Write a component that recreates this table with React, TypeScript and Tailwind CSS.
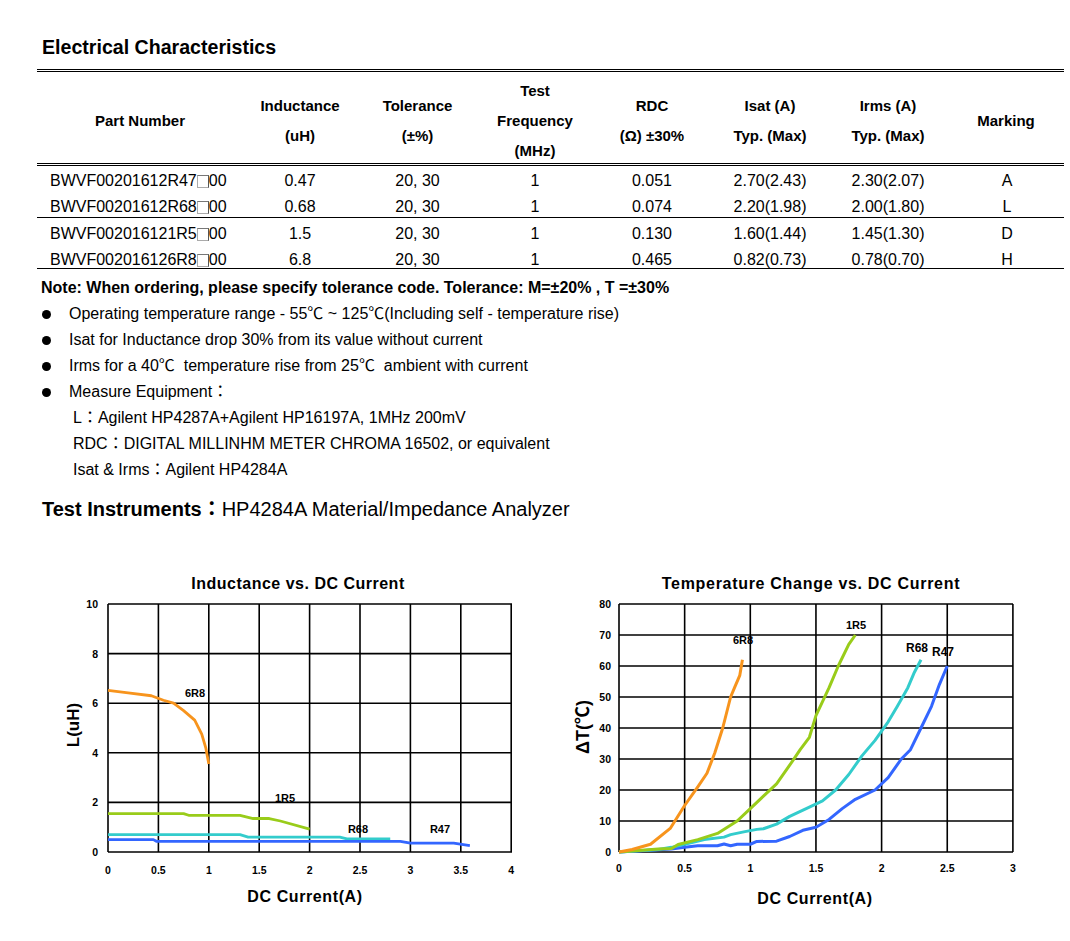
import React from "react";

type Pt = [number, number];

const COLS = "grid grid-cols-[206px_114px_121px_114px_120px_116px_120px_116px]";

const rows = [
    ["BWVF00201612R47", "0.47", "20, 30", "1", "0.051", "2.70(2.43)", "2.30(2.07)", "A"],
    ["BWVF00201612R68", "0.68", "20, 30", "1", "0.074", "2.20(1.98)", "2.00(1.80)", "L"],
    ["BWVF002016121R5", "1.5", "20, 30", "1", "0.130", "1.60(1.44)", "1.45(1.30)", "D"],
    ["BWVF002016126R8", "6.8", "20, 30", "1", "0.465", "0.82(0.73)", "0.78(0.70)", "H"],
];

const headers: string[][] = [
    ["Part Number"],
    ["Inductance", "(uH)"],
    ["Tolerance", "(±%)"],
    ["Test", "Frequency", "(MHz)"],
    ["RDC", "(Ω) ±30%"],
    ["Isat (A)", "Typ. (Max)"],
    ["Irms (A)", "Typ. (Max)"],
    ["Marking"],
];

const ORANGE = "#f7941d";
const GREEN = "#99cc1a";
const TEAL = "#33cccc";
const BLUE = "#3366ff";

// inductance chart data (A, uH)
const lSeries: { color: string; pts: Pt[] }[] = [
    { color: ORANGE, pts: [[0, 6.52], [0.2, 6.42], [0.43, 6.3], [0.55, 6.12], [0.65, 6.0], [0.75, 5.7], [0.86, 5.32], [0.93, 4.75], [0.97, 4.2], [1.0, 3.55]] },
    { color: GREEN, pts: [[0, 1.55], [0.75, 1.55], [0.8, 1.48], [1.31, 1.48], [1.44, 1.35], [1.6, 1.35], [1.71, 1.25], [2.0, 0.92]] },
    { color: TEAL, pts: [[0, 0.7], [1.31, 0.7], [1.39, 0.6], [2.3, 0.6], [2.37, 0.53], [2.8, 0.53]] },
    { color: BLUE, pts: [[0, 0.5], [0.45, 0.5], [0.48, 0.43], [2.9, 0.43], [3.0, 0.36], [3.43, 0.36], [3.59, 0.26]] },
];

// temperature chart data (A, degC)
const tSeries: { color: string; pts: Pt[] }[] = [
    { color: BLUE, pts: [[0, 0], [0.4, 1], [0.5, 1.5], [0.6, 2], [0.75, 2], [0.8, 2.6], [0.85, 2], [0.9, 2.5], [1.0, 2.5], [1.05, 3.4], [1.2, 3.5], [1.3, 5], [1.4, 7], [1.5, 8], [1.6, 10.5], [1.7, 14], [1.8, 17], [1.95, 20], [2.05, 24], [2.15, 30], [2.22, 33], [2.3, 40], [2.38, 47], [2.44, 54], [2.5, 60]] },
    { color: TEAL, pts: [[0, 0], [0.3, 0.8], [0.4, 1.5], [0.5, 2.5], [0.65, 4], [0.8, 4.8], [0.85, 5.6], [0.95, 6.5], [1.05, 7.3], [1.1, 7.5], [1.2, 9], [1.3, 11.5], [1.45, 14.5], [1.55, 16.5], [1.65, 20], [1.75, 25], [1.85, 31], [1.95, 36], [2.05, 42], [2.12, 47], [2.2, 53], [2.25, 58], [2.3, 62]] },
    { color: GREEN, pts: [[0, 0], [0.3, 1], [0.4, 1.1], [0.45, 2.4], [0.6, 4], [0.75, 6], [0.9, 10], [1.0, 14], [1.1, 18], [1.2, 22], [1.3, 28], [1.38, 33], [1.45, 37], [1.5, 44], [1.6, 53], [1.67, 60], [1.75, 67], [1.8, 70]] },
    { color: ORANGE, pts: [[0, 0], [0.1, 0.8], [0.24, 2.5], [0.39, 7.6], [0.5, 15], [0.6, 21], [0.67, 25.4], [0.73, 32], [0.79, 40], [0.85, 50], [0.88, 53], [0.92, 57], [0.94, 62]] },
];

const chartFont = "'Liberation Sans', Arial, 'Noto Sans CJK TC', sans-serif";

function InductanceChart() {
    const px = (a: number) => 48 + a * 100.8;
    const py = (l: number) => 287 - l * 24.8;
    const xt = [0, 0.5, 1, 1.5, 2, 2.5, 3, 3.5, 4];
    const yt = [0, 2, 4, 6, 8, 10];
    return (
        <svg width="470" height="350" viewBox="0 0 470 350" fontFamily={chartFont}>
            <text x="238" y="24" textAnchor="middle" fontSize="16" fontWeight="700" letterSpacing="0.5">Inductance vs. DC Current</text>
            {xt.map((v) => (
                <g key={v}>
                    <line x1={px(v)} y1="39" x2={px(v)} y2="287" stroke="#000" strokeWidth="1.6" />
                    <text x={px(v)} y="309" textAnchor="middle" fontSize="10.5" fontWeight="700">{v}</text>
                </g>
            ))}
            {yt.map((v) => (
                <g key={v}>
                    <line x1="48" y1={py(v)} x2="452" y2={py(v)} stroke="#000" strokeWidth="1.6" />
                    <text x="38" y={py(v) + 4} textAnchor="end" fontSize="10.5" fontWeight="700">{v}</text>
                </g>
            ))}
            {lSeries.map((s) => (
                <polyline key={s.color} points={s.pts.map(([a, l]) => `${px(a)},${py(l)}`).join(" ")} fill="none" stroke={s.color} strokeWidth="2.8" strokeLinejoin="round" />
            ))}
            <text x="135" y="132" textAnchor="middle" fontSize="11" fontWeight="700">6R8</text>
            <text x="225" y="237" textAnchor="middle" fontSize="11" fontWeight="700">1R5</text>
            <text x="298" y="268" textAnchor="middle" fontSize="11" fontWeight="700">R68</text>
            <text x="380" y="268" textAnchor="middle" fontSize="11" fontWeight="700">R47</text>
            <text x="13" y="160" textAnchor="middle" dominantBaseline="central" fontSize="17" fontWeight="700" transform="rotate(-90 13 160)">L(uH)</text>
            <text x="245" y="337" textAnchor="middle" fontSize="16" fontWeight="700" letterSpacing="0.6">DC Current(A)</text>
        </svg>
    );
}

function TemperatureChart() {
    const px = (a: number) => 49 + a * 131.3;
    const py = (t: number) => 287 - t * 3.1;
    const xt = [0, 0.5, 1, 1.5, 2, 2.5, 3];
    const yt = [0, 10, 20, 30, 40, 50, 60, 70, 80];
    return (
        <svg width="460" height="350" viewBox="0 0 460 350" fontFamily={chartFont}>
            <text x="241" y="24" textAnchor="middle" fontSize="16" fontWeight="700" letterSpacing="0.7">Temperature Change vs. DC Current</text>
            {xt.map((v) => (
                <g key={v}>
                    <line x1={px(v)} y1="39" x2={px(v)} y2="287" stroke="#000" strokeWidth="1.6" />
                    <text x={px(v)} y="307" textAnchor="middle" fontSize="10.5" fontWeight="700">{v}</text>
                </g>
            ))}
            {yt.map((v) => (
                <g key={v}>
                    <line x1="49" y1={py(v)} x2="443" y2={py(v)} stroke="#000" strokeWidth="1.6" />
                    <text x="41" y={py(v) + 4} textAnchor="end" fontSize="10.5" fontWeight="700">{v}</text>
                </g>
            ))}
            {tSeries.map((s) => (
                <polyline key={s.color} points={s.pts.map(([a, t]) => `${px(a)},${py(t)}`).join(" ")} fill="none" stroke={s.color} strokeWidth="3" strokeLinejoin="round" />
            ))}
            <text x="173" y="79" textAnchor="middle" fontSize="11" fontWeight="700">6R8</text>
            <text x="286" y="64" textAnchor="middle" fontSize="11" fontWeight="700">1R5</text>
            <text x="347" y="87" textAnchor="middle" fontSize="12" fontWeight="700">R68</text>
            <text x="373" y="91" textAnchor="middle" fontSize="12" fontWeight="700">R47</text>
            <text x="13" y="162" textAnchor="middle" dominantBaseline="central" fontSize="18" fontWeight="700" transform="rotate(-90 13 162)">ΔT(℃)</text>
            <text x="245" y="339" textAnchor="middle" fontSize="16" fontWeight="700" letterSpacing="0.6">DC Current(A)</text>
        </svg>
    );
}

function DataRow({ r }: { r: string[] }) {
    return (
        <div className={`${COLS} text-[16px] leading-[26px]`}>
            <div className="pl-[13px] flex items-center">
                {r[0]}
                <span className="inline-block shrink-0 w-[12px] h-[13px] border border-[#aaa] border-r-[#555] border-t-[#777]" />
                00
            </div>
            {r.slice(1, 7).map((c, i) => (
                <div key={i} className="text-center">{c}</div>
            ))}
            <div className="text-center pl-[2px]">{r[7]}</div>
        </div>
    );
}

export default function App() {
    return (
        <div className="min-h-[941px] w-[1070px] bg-white text-black pl-[37px] pt-[37px] font-['Liberation_Sans',Arial,'Noto_Sans_CJK_TC',sans-serif]">
            <h2 className="ml-[5px] text-[19.6px] font-bold leading-[20px]">Electrical Characteristics</h2>

            {/* table */}
            <div className="mt-[12px] w-[1027px]">
                <div className="h-[3px] border-t-[3px] border-double border-black" />
                <div className={`${COLS} h-[91px] pt-[4px] text-[15px] font-bold`}>
                    {headers.map((h, i) => (
                        <div key={i} className="flex flex-col items-center justify-center leading-[30px]">
                            {h.map((t) => (
                                <span key={t}>{t}</span>
                            ))}
                        </div>
                    ))}
                </div>
                <div className="h-[3px] border-t-[3px] border-double border-black" />
                <div className="h-[51px] pt-[2px]">
                    <DataRow r={rows[0]} />
                    <DataRow r={rows[1]} />
                </div>
                <div className="h-px bg-black" />
                <div className="h-[50px] pt-[3px]">
                    <DataRow r={rows[2]} />
                    <DataRow r={rows[3]} />
                </div>
                <div className="h-px bg-black" />
            </div>

            {/* notes */}
            <div className="mt-[6px] text-[16px] leading-[26px]">
                <div className="ml-[4px] font-bold">Note: When ordering, please specify tolerance code. Tolerance: M=±20% , T =±30%</div>
                {[
                    "Operating temperature range - 55℃ ~ 125℃(Including self - temperature rise)",
                    "Isat for Inductance drop 30% from its value without current",
                    "Irms for a 40℃  temperature rise from 25℃  ambient with current",
                    "Measure Equipment：",
                ].map((t) => (
                    <div key={t} className="flex items-center whitespace-pre">
                        <span className="ml-[5px] mr-[18px] h-[9px] w-[9px] rounded-full bg-black" />
                        {t}
                    </div>
                ))}
                <div className="pl-[36px]">L：Agilent HP4287A+Agilent HP16197A, 1MHz 200mV</div>
                <div className="pl-[36px]">RDC：DIGITAL MILLINHM METER CHROMA 16502, or equivalent</div>
                <div className="pl-[36px]">Isat &amp; Irms：Agilent HP4284A</div>
            </div>

            <div className="ml-[5px] mt-[14px] text-[20px] leading-[24px]">
                <span className="font-bold">Test Instruments：</span>HP4284A Material/Impedance Analyzer
            </div>

            {/* charts */}
            <div className="ml-[23px] mt-[44px] flex gap-[40px]">
                <InductanceChart />
                <TemperatureChart />
            </div>
        </div>
    );
}
